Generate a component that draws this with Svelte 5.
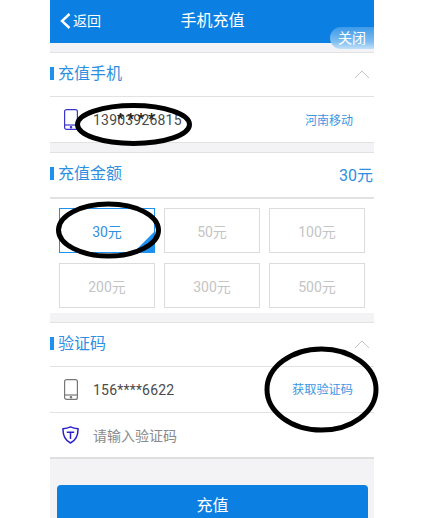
<script>
  const amounts = [30, 50, 100, 200, 300, 500];
  let selected = $state(30);
</script>

<div class="page">
  <div class="phone">
    <header class="topbar">
      <div class="back">
        <svg width="14" height="18" viewBox="0 0 14 18" fill="none" stroke="#fff" stroke-width="2.4"><polyline points="11.5 2 4 9 11.5 16" /></svg>
        <span>返回</span>
      </div>
      <div class="title">手机充值</div>
    </header>
    <div class="close">关闭</div>

    <div class="gap"></div>

    <section>
      <div class="head">
        <h2>充值手机</h2>
        <svg class="chev" width="16" height="9" viewBox="0 0 16 9" fill="none" stroke="#c4c4c4"><polyline points="1 8 8 1 15 8" /></svg>
      </div>
      <div class="row">
        <span class="icon">
          <svg width="14" height="21" viewBox="0 0 14 21" fill="none" stroke="#3a35c8" stroke-width="1.2"><rect x="0.6" y="0.6" width="12.8" height="19.8" rx="2" /><line x1="0.6" y1="16" x2="13.4" y2="16" /><circle cx="7" cy="18.2" r="0.7" fill="#3a35c8" /></svg>
        </span>
        <span class="num">13903926815</span>
        <span class="stars">****</span>
        <span class="link">河南移动</span>
      </div>
    </section>

    <div class="gap"></div>

    <section>
      <div class="head thick">
        <h2>充值金额</h2>
        <span class="picked">{selected}元</span>
      </div>
      <div class="grid">
        {#each amounts as a}
          <button class="amt" class:on={a === selected} onclick={() => (selected = a)}>{a}元</button>
        {/each}
      </div>
    </section>

    <div class="gap"></div>

    <section>
      <div class="head">
        <h2>验证码</h2>
        <svg class="chev" width="16" height="9" viewBox="0 0 16 9" fill="none" stroke="#c4c4c4"><polyline points="1 8 8 1 15 8" /></svg>
      </div>
      <div class="row">
        <span class="icon">
          <svg width="14" height="21" viewBox="0 0 14 21" fill="none" stroke="#777" stroke-width="1.2"><rect x="0.6" y="0.6" width="12.8" height="19.8" rx="2" /><line x1="0.6" y1="16" x2="13.4" y2="16" /><circle cx="7" cy="18.2" r="0.7" fill="#777" /></svg>
        </span>
        <span class="num">156****6622</span>
        <span class="link long">获取验证码</span>
      </div>
      <div class="row last">
        <span class="icon">
          <svg width="17" height="18" viewBox="0 0 17 18" fill="none" stroke="#2a22c8" stroke-width="1.5"><path d="M8.5 0.9 C6 2.1 3.6 2.6 1 2.7 C0.8 9 2.6 14.2 8.5 17 C14.4 14.2 16.2 9 16 2.7 C13.4 2.6 11 2.1 8.5 0.9 Z" /><path d="M4.8 6.2 H12.2 M8.5 6.2 V13" /></svg>
        </span>
        <span class="placeholder">请输入验证码</span>
      </div>
    </section>

    <div class="foot">
      <button class="submit">充值</button>
    </div>
  </div>

  <!-- hand-drawn marks on top of the screenshot -->
  <svg class="marks" width="431" height="518" viewBox="0 0 431 518" fill="none" stroke="#000" stroke-width="5">
    <ellipse cx="133.5" cy="124.5" rx="56" ry="19" />
    <ellipse cx="108.5" cy="230" rx="50" ry="26" />
    <ellipse cx="321.5" cy="389.5" rx="54.5" ry="40.5" />
  </svg>
</div>

<style>
  :global(body) {
    margin: 0;
    background: #fff;
  }

  .page {
    position: relative;
    width: 431px;
    height: 518px;
    overflow: hidden;
    font-family: Roboto, "Noto Sans CJK SC", sans-serif;
  }

  .phone {
    position: relative;
    width: 324px;
    height: 518px;
    margin-left: 50px;
    background: #f3f3f5;
    overflow: hidden;
  }

  .topbar {
    position: relative;
    height: 43px;
    background: #0b80e2;
    color: #fff;
    display: flex;
    align-items: center;
    justify-content: center;
  }

  .back {
    position: absolute;
    left: 8px;
    top: 12px;
    display: flex;
    align-items: center;
    gap: 1px;
    font-size: 14px;
    line-height: 18px;
  }

  .title {
    font-size: 16px;
    margin-top: -5px;
    margin-left: 1px;
  }

  .close {
    position: absolute;
    right: 0;
    top: 27px;
    width: 44px;
    height: 22px;
    box-sizing: border-box;
    padding-left: 8px;
    border-radius: 11px 0 0 11px;
    background: linear-gradient(#3d9ae8, #7dbcf0 65%, #c0e0f8);
    color: #fff;
    font-size: 14px;
    line-height: 23px;
  }

  .gap {
    height: 9px;
    border-bottom: 1px solid #e2e2e2;
  }

  section {
    background: #fff;
  }

  .head {
    height: 43px;
    display: flex;
    align-items: center;
    justify-content: space-between;
    border-bottom: 1px solid #e2e2e2;
    padding-right: 1px;
  }

  .head.thick {
    height: 44px;
    border-bottom: 2px solid #e2e2e2;
  }

  h2 {
    margin: 0 0 2px;
    font-size: 16px;
    font-weight: 400;
    color: #2f8fe0;
    line-height: 14px;
    padding-left: 8px;
    position: relative;
  }

  h2::before {
    content: "";
    position: absolute;
    left: 0;
    top: 0;
    width: 4px;
    height: 13px;
    background: #1e90f0;
  }

  .chev {
    margin-right: 3px;
    margin-top: -1px;
  }

  .picked {
    font-size: 16px;
    color: #2f8fe0;
    margin-bottom: 3px;
  }

  .row {
    position: relative;
    height: 45px;
    display: flex;
    align-items: center;
    padding-left: 12px;
    padding-right: 21px;
    border-bottom: 1px solid #e2e2e2;
  }

  .row.last {
    border-bottom: 2px solid #dfdfdf;
    height: 44px;
  }

  .icon {
    flex: none;
    width: 17px;
    display: flex;
    justify-content: center;
  }

  .num {
    margin-left: 14px;
    font-size: 14px;
    letter-spacing: 0.2px;
    color: #4a4a4a;
  }

  .stars {
    position: absolute;
    left: 67px;
    top: 13px;
    font-size: 15px;
    font-weight: 700;
    color: #222;
    letter-spacing: 3.5px;
  }

  .link {
    margin-left: auto;
    font-size: 12px;
    color: #3d95e2;
  }

  .link.long {
    font-size: 12.2px;
    margin-top: -2px;
  }

  .placeholder {
    margin-left: 14px;
    font-size: 14px;
    color: #8a8a8a;
    margin-top: -1px;
  }

  .grid {
    display: grid;
    grid-template-columns: repeat(3, 96px);
    grid-auto-rows: 45px;
    column-gap: 9px;
    row-gap: 10px;
    padding: 9px 9px 5px 9px;
  }

  .amt {
    position: relative;
    overflow: hidden;
    padding: 0;
    border: 1px solid #dcdcdc;
    background: #fff;
    color: #c4c4c4;
    font: inherit;
    font-size: 14px;
  }

  .amt.on {
    border-color: #1e90f0;
    color: #2f8fe0;
  }

  .amt.on::after {
    content: "";
    position: absolute;
    right: 0;
    bottom: 0;
    width: 0;
    height: 0;
    border-left: 20px solid transparent;
    border-bottom: 20px solid #1e90f0;
  }

  .foot {
    padding: 26px 6px 0 7px;
  }

  .submit {
    display: block;
    width: 100%;
    height: 46px;
    border: 0;
    border-radius: 4px;
    background: #0b80e2;
    color: #fff;
    font: inherit;
    font-size: 16px;
    padding-bottom: 9px;
  }

  .marks {
    position: absolute;
    left: 0;
    top: 0;
    pointer-events: none;
  }
</style>
